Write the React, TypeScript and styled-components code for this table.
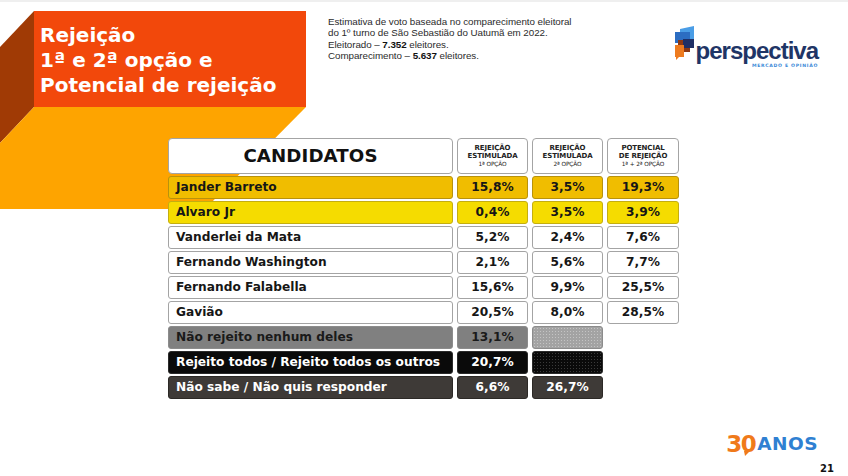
import styled, { createGlobalStyle } from "styled-components";

const GlobalStyle = createGlobalStyle`
  html, body { margin: 0; padding: 0; background: #fff; }
  body { font-family: "DejaVu Sans", "Open Sans", sans-serif; }
`;

const Page = styled.div`
  position: relative;
  width: 848px;
  height: 476px;
  overflow: hidden;
  display: flex;
  flex-direction: column;
  background: #fff;
  box-shadow: inset 0 2px 0 #efefef;
`;

const Backdrop = styled.svg`
  position: absolute;
  top: 0;
  left: 0;
  z-index: 0;
`;

const Header = styled.header`
  position: relative;
  z-index: 1;
  display: flex;
  align-items: flex-start;
  height: 138px;
  flex: 0 0 auto;
`;

const TitleBox = styled.div`
  margin: 11px 0 0 34px;
  width: 272px;
  height: 96px;
  box-sizing: border-box;
  padding: 12px 0 0 6px;
  background: #f2480b;
  color: #fff;
  font: 700 20px/25px "DejaVu Sans", sans-serif;
`;

const Info = styled.div`
  margin: 16px 0 0 22px;
  color: #2b2b2b;
  font: 400 9.8px/11.3px "Liberation Sans", sans-serif;
  letter-spacing: -0.05px;

  b {
    font-weight: 700;
    color: #111;
  }
`;

const Logo = styled.div`
  margin: 24px 30px 0 auto;
  display: flex;
  align-items: flex-start;
`;

const LogoWords = styled.div`
  margin-top: 15px;
  display: flex;
  flex-direction: column;
  align-items: flex-end;
`;

const LogoName = styled.div`
  color: #1f3566;
  font: 700 24px/23px "Liberation Sans", sans-serif;
  letter-spacing: -1px;
`;

const LogoTag = styled.div`
  margin-top: 1px;
  color: #3a8ad8;
  font: 700 4.6px/6px "DejaVu Sans", sans-serif;
  letter-spacing: 0.7px;
`;

const Table = styled.div`
  position: relative;
  z-index: 1;
  margin-left: 168px;
  display: grid;
  grid-template-columns: 285px 71px 71px 72px;
  grid-template-rows: 36px;
  grid-auto-rows: 23px;
  column-gap: 4px;
  row-gap: 2px;
`;

type Tone = "white" | "gold" | "yellow" | "gray" | "black" | "dark";

const tones: Record<Tone, { bg: string; border: string; color: string; dots: string }> = {
  white: { bg: "#fff", border: "#a4a4a4", color: "#161616", dots: "#fff" },
  gold: { bg: "#f0bd00", border: "#b8920c", color: "#161616", dots: "#f0bd00" },
  yellow: { bg: "#f5dc00", border: "#c4ae10", color: "#161616", dots: "#f5dc00" },
  gray: { bg: "#a3a3a3", border: "#8c8c8c", color: "#1a1a1a", dots: "#c4c4c4" },
  black: { bg: "#0a0a0a", border: "#2a2a2a", color: "#fff", dots: "#3a3a3a" },
  dark: { bg: "#3e3a37", border: "#2c2926", color: "#fff", dots: "#3e3a37" },
};

const Cell = styled.div<{ $tone: Tone; $name?: boolean; $dots?: boolean }>`
  box-sizing: border-box;
  display: flex;
  align-items: center;
  justify-content: ${(p) => (p.$name ? "flex-start" : "center")};
  padding-left: ${(p) => (p.$name ? "7px" : "0")};
  border: 1px solid ${(p) => tones[p.$tone].border};
  border-radius: 3px;
  background-color: ${(p) => (p.$tone === "gray" && !p.$dots ? "#808080" : tones[p.$tone].bg)};
  background-image: ${(p) =>
    p.$dots ? `radial-gradient(${tones[p.$tone].dots} 0.7px, transparent 0.9px)` : "none"};
  background-size: 3px 3px;
  color: ${(p) => tones[p.$tone].color};
  font: 700 12.2px/1 "DejaVu Sans", sans-serif;
  white-space: nowrap;
`;

const HeadName = styled.div`
  box-sizing: border-box;
  display: flex;
  align-items: center;
  justify-content: center;
  border: 1px solid #a4a4a4;
  border-radius: 4px;
  background: #fff;
  color: #111;
  font: 700 18.2px/1 "DejaVu Sans", sans-serif;
  letter-spacing: 0.1px;
`;

const HeadCol = styled.div`
  box-sizing: border-box;
  display: flex;
  flex-direction: column;
  align-items: center;
  justify-content: center;
  border: 1px solid #a4a4a4;
  border-radius: 4px;
  background: #fff;
  color: #222;
  font: 700 7px/8.3px "DejaVu Sans", sans-serif;
  letter-spacing: -0.1px;
  text-align: center;
`;

const HeadSmall = styled.span`
  font-size: 5.8px;
  font-weight: 400;
`;

const Footer = styled.footer`
  margin-top: auto;
  display: flex;
  flex-direction: column;
  align-items: flex-end;
  padding: 0 14px 1px 0;
`;

const Anos = styled.div`
  margin-right: 16px;
  display: flex;
  align-items: center;
  font: 700 18.5px/22px "DejaVu Sans", sans-serif;
`;

const AnosNum = styled.span`
  position: relative;
  color: #f07a1a;
  font-size: 23px;
  letter-spacing: -1.5px;
  margin-right: 2px;
`;

const Tail = styled.svg`
  position: absolute;
  left: 18px;
  bottom: -1px;
`;

const AnosWord = styled.span`
  color: #2f80d2;
  letter-spacing: 0.5px;
`;

const PageNum = styled.div`
  margin-top: 8px;
  color: #111;
  font: 700 10px/12px "DejaVu Sans", sans-serif;
`;

type Row = { name: string; tone: Tone; values: (string | "dots" | null)[] };

const rows: Row[] = [
  { name: "Jander Barreto", tone: "gold", values: ["15,8%", "3,5%", "19,3%"] },
  { name: "Alvaro Jr", tone: "yellow", values: ["0,4%", "3,5%", "3,9%"] },
  { name: "Vanderlei da Mata", tone: "white", values: ["5,2%", "2,4%", "7,6%"] },
  { name: "Fernando Washington", tone: "white", values: ["2,1%", "5,6%", "7,7%"] },
  { name: "Fernando Falabella", tone: "white", values: ["15,6%", "9,9%", "25,5%"] },
  { name: "Gavião", tone: "white", values: ["20,5%", "8,0%", "28,5%"] },
  { name: "Não rejeito nenhum deles", tone: "gray", values: ["13,1%", "dots", null] },
  { name: "Rejeito todos / Rejeito todos os outros", tone: "black", values: ["20,7%", "dots", null] },
  { name: "Não sabe / Não quis responder", tone: "dark", values: ["6,6%", "26,7%", null] },
];

const LogoMark = () => (
  <svg width="22" height="36" viewBox="0 0 22 36">
    <polygon points="6,5 20,2 20,16 6,16" fill="#4a9de6" />
    <rect x="1" y="8" width="15" height="11" fill="#2c6dc2" />
    <polygon points="4,16 16,16 16,28 10,28 7,31 7,28 4,28" fill="#8c3915" />
    <rect x="9" y="15" width="11" height="9" fill="#1f2f66" />
    <polygon points="1,21 10,21 10,33 5,33 2,36 2,33 1,33" fill="#ee7b1f" />
  </svg>
);

export default function App() {
  return (
    <Page>
      <GlobalStyle />
      <Backdrop width="320" height="220" viewBox="0 0 320 220">
        <polygon points="0,47 34,11 34,107 0,143" fill="#a03a05" />
        <polygon points="34,107 306,107 205,209 0,209 0,143" fill="#fea400" />
      </Backdrop>

      <Header>
        <TitleBox>
          Rejeição
          <br />
          1ª e 2ª opção e
          <br />
          Potencial de rejeição
        </TitleBox>
        <Info>
          Estimativa de voto baseada no comparecimento eleitoral
          <br />
          do 1º turno de São Sebastião do Uatumã em 2022.
          <br />
          Eleitorado – <b>7.352</b> eleitores.
          <br />
          Comparecimento – <b>5.637</b> eleitores.
        </Info>
        <Logo>
          <LogoMark />
          <LogoWords>
            <LogoName>perspectiva</LogoName>
            <LogoTag>MERCADO E OPINIÃO</LogoTag>
          </LogoWords>
        </Logo>
      </Header>

      <Table>
        <HeadName>CANDIDATOS</HeadName>
        <HeadCol>
          REJEIÇÃO
          <br />
          ESTIMULADA
          <br />
          <HeadSmall>1ª OPÇÃO</HeadSmall>
        </HeadCol>
        <HeadCol>
          REJEIÇÃO
          <br />
          ESTIMULADA
          <br />
          <HeadSmall>2ª OPÇÃO</HeadSmall>
        </HeadCol>
        <HeadCol>
          POTENCIAL
          <br />
          DE REJEIÇÃO
          <br />
          <HeadSmall>1ª + 2ª OPÇÃO</HeadSmall>
        </HeadCol>

        {rows.map((r) => [
          <Cell key={r.name} $tone={r.tone} $name>
            {r.name}
          </Cell>,
          ...r.values.map((v, i) =>
            v === null ? (
              <div key={r.name + i} />
            ) : v === "dots" ? (
              <Cell key={r.name + i} $tone={r.tone} $dots />
            ) : (
              <Cell key={r.name + i} $tone={r.tone}>
                {v}
              </Cell>
            )
          ),
        ])}
      </Table>

      <Footer>
        <Anos>
          <AnosNum>
            30
            <Tail width="6" height="5" viewBox="0 0 6 5">
              <polygon points="0,0 6,0 1,5" fill="#f07a1a" />
            </Tail>
          </AnosNum>
          <AnosWord>ANOS</AnosWord>
        </Anos>
        <PageNum>21</PageNum>
      </Footer>
    </Page>
  );
}
